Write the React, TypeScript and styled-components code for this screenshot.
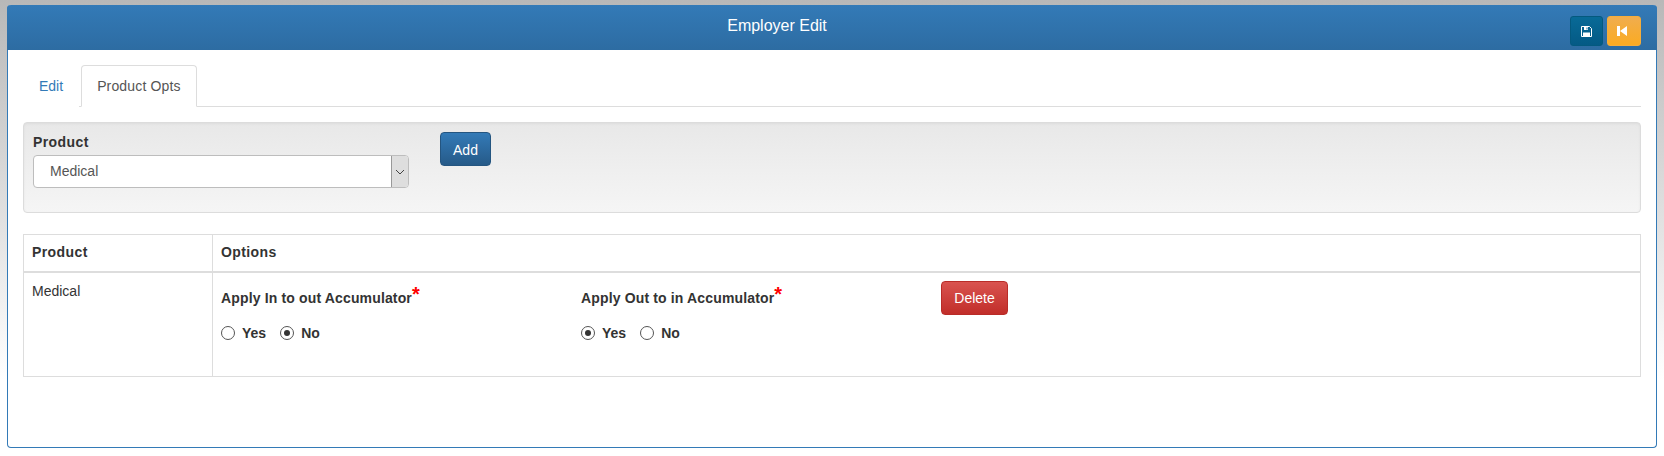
import React from "react"
import styled, { createGlobalStyle } from "styled-components"

const Global= createGlobalStyle`
    html, body {
        margin: 0;
        padding: 0;
        height: 456px;
        overflow: hidden;
        background: linear-gradient(to bottom, #b8b8b8 0, #ffffff 380px);
        font-family: "Liberation Sans", Arial, sans-serif;
        font-size: 14px;
        color: #333;
    }
    * { box-sizing: border-box; }
`
const Page= styled.div`
    padding: 5px 7px 0;
`
const Panel= styled.div`
    height: 443px;
    background: #fff;
    border: 1px solid #337ab7;
    border-top: 0;
    border-radius: 4px;
`
const Header= styled.div`
    height: 45px;
    margin: 0 -1px;
    padding-right: 110px;
    background: linear-gradient(to bottom, #337ab7 0, #2d6ca2 100%);
    border-radius: 4px 4px 0 0;
    color: #fff;
    font-size: 16px;
    display: flex;
    align-items: center;
    justify-content: center;
    position: relative;
`
const HeaderTitle= styled.div`
    margin-top: -4px;
`
const HeaderActions= styled.div`
    position: absolute;
    top: 11px;
    right: 16px;
    display: flex;
    gap: 4px;
`
const IconButton= styled.button<{ $tone: "save" | "back" }>`
    width: ${p=> p.$tone === "save" ? "33px" : "34px"};
    height: 30px;
    padding: 0;
    display: flex;
    align-items: center;
    justify-content: center;
    color: #fff;
    border-radius: 3px;
    border: 1px solid ${p=> p.$tone === "save" ? "#04597f" : "#f5ad3a"};
    background: ${p=> p.$tone === "save"
        ? "linear-gradient(to bottom, #086a97 0, #045a85 100%)"
        : "linear-gradient(to bottom, #f0ad4e 0, #fbab22 100%)"};
`
const BackIcon= styled.svg`
    margin-left: -4px;
`
const Body= styled.div`
    padding: 15px 15px 0;
`
const Tabs= styled.div`
    display: flex;
    gap: 2px;
    height: 42px;
    border-bottom: 1px solid #ddd;
`
const Tab= styled.div<{ $active?: boolean }>`
    height: 42px;
    padding: 10px 15px;
    line-height: 20px;
    letter-spacing: ${p=> p.$active ? ".15px" : "0"};
    border-radius: 4px 4px 0 0;
    border: 1px solid ${p=> p.$active ? "#ddd" : "transparent"};
    border-bottom-color: ${p=> p.$active ? "#fff" : "transparent"};
    color: ${p=> p.$active ? "#555" : "#337ab7"};
    background: #fff;
`
const Well= styled.div`
    margin-top: 15px;
    height: 91px;
    padding: 9px;
    display: flex;
    align-items: flex-start;
    gap: 31px;
    border: 1px solid #dcdcdc;
    border-radius: 4px;
    background: linear-gradient(to bottom, #e8e8e8 0, #f5f5f5 100%);
    box-shadow: inset 0 1px 3px rgba(0,0,0,.05);
`
const Field= styled.div`
    width: 376px;
`
const FieldLabel= styled.div`
    font-weight: bold;
    line-height: 20px;
    letter-spacing: .4px;
    margin-bottom: 3px;
`
const SelectBox= styled.div`
    height: 33px;
    display: flex;
    background: #fff;
    border: 1px solid #bdbdbd;
    border-radius: 4px;
    overflow: hidden;
    color: #555;
    line-height: 31px;
`
const SelectValue= styled.div`
    flex: 1;
    padding-left: 16px;
`
const SelectArrow= styled.div`
    width: 17px;
    display: flex;
    align-items: center;
    justify-content: center;
    background: #dedede;
    border-left: 1px solid #999;
`
const Button= styled.button<{ $danger?: boolean }>`
    height: 34px;
    padding: 0 12px;
    color: #fff;
    font: 14px "Liberation Sans", Arial, sans-serif;
    border-radius: 4px;
    border: 1px solid ${p=> p.$danger ? "#b92c28" : "#245580"};
    background: ${p=> p.$danger
        ? "linear-gradient(to bottom, #d9534f 0, #c12e2a 100%)"
        : "linear-gradient(to bottom, #337ab7 0, #265a88 100%)"};
`
const AddButton= styled(Button)`
    width: 51px;
    padding-top: 2px;
`
const DeleteButton= styled(Button)`
    width: 67px;
    flex: none;
`
const Table= styled.div`
    margin-top: 21px;
    border: 1px solid #ddd;
    display: grid;
    grid-template-columns: 188px 1fr;
`
const HeadCell= styled.div<{ $first?: boolean }>`
    height: 38px;
    padding: 0 8px;
    line-height: 34px;
    font-weight: bold;
    letter-spacing: .4px;
    border-bottom: 2px solid #ddd;
    border-left: ${p=> p.$first ? "0" : "1px solid #ddd"};
`
const ProductCell= styled.div`
    height: 103px;
    padding: 8px;
    line-height: 20px;
`
const OptionsCell= styled.div`
    height: 103px;
    padding: 8px;
    border-left: 1px solid #ddd;
    display: flex;
    align-items: flex-start;
`
const OptionGroup= styled.div`
    width: 360px;
    flex: none;
    padding-top: 7px;
`
const OptionLabel= styled.div`
    font-weight: bold;
    line-height: 20px;
    letter-spacing: .15px;
`
const Required= styled.sup`
    color: #f00;
    font-size: 20px;
    line-height: 0;
    vertical-align: baseline;
    position: relative;
    top: -2px;
`
const RadioRow= styled.div`
    display: flex;
    gap: 14px;
    margin-top: 15px;
`
const RadioLabel= styled.label`
    display: flex;
    align-items: center;
    gap: 7px;
    font-weight: bold;
    line-height: 20px;
`
const RadioMark= styled.span<{ $checked?: boolean }>`
    width: 14px;
    height: 14px;
    border-radius: 50%;
    border: 1px solid #555;
    background: #fff;
    display: flex;
    align-items: center;
    justify-content: center;
    &::after {
        content: "";
        width: 6px;
        height: 6px;
        border-radius: 50%;
        background: ${p=> p.$checked ? "#333" : "transparent"};
    }
`

const Radio= ({ label, checked }: { label: string, checked?: boolean })=> (
    <RadioLabel>
        <RadioMark $checked={checked} />
        {label}
    </RadioLabel>
)

const Option= ({ label, yes }: { label: string, yes: boolean })=> (
    <OptionGroup>
        <OptionLabel>{label}<Required>*</Required></OptionLabel>
        <RadioRow>
            <Radio label="Yes" checked={yes} />
            <Radio label="No" checked={!yes} />
        </RadioRow>
    </OptionGroup>
)

const App= ()=> {
    return (
        <Page>
            <Global />
            <Panel>
                <Header>
                    <HeaderTitle>Employer Edit</HeaderTitle>
                    <HeaderActions>
                        <IconButton $tone="save">
                            <svg width="11" height="11" viewBox="0 0 11 11">
                                <path d="M.5.5h8l2 2v8H.5z" fill="none" stroke="#fff" />
                                <path d="M3 1h4v3H3zM2 6.5h7V10H2z" fill="#fff" />
                                <path d="M5.5 1.5h1v2h-1z" fill="#086a97" />
                            </svg>
                        </IconButton>
                        <IconButton $tone="back">
                            <BackIcon width="10" height="10" viewBox="0 0 10 10">
                                <path d="M0 0h3v10H0zM3 5l7-5v10z" fill="#fff" />
                            </BackIcon>
                        </IconButton>
                    </HeaderActions>
                </Header>
                <Body>
                    <Tabs>
                        <Tab>Edit</Tab>
                        <Tab $active>Product Opts</Tab>
                    </Tabs>
                    <Well>
                        <Field>
                            <FieldLabel>Product</FieldLabel>
                            <SelectBox>
                                <SelectValue>Medical</SelectValue>
                                <SelectArrow>
                                    <svg width="10" height="6" viewBox="0 0 10 6">
                                        <path d="M1 1l4 4 4-4" fill="none" stroke="#444" strokeWidth="1" />
                                    </svg>
                                </SelectArrow>
                            </SelectBox>
                        </Field>
                        <AddButton>Add</AddButton>
                    </Well>
                    <Table>
                        <HeadCell $first>Product</HeadCell>
                        <HeadCell>Options</HeadCell>
                        <ProductCell>Medical</ProductCell>
                        <OptionsCell>
                            <Option label="Apply In to out Accumulator" yes={false} />
                            <Option label="Apply Out to in Accumulator" yes={true} />
                            <DeleteButton $danger>Delete</DeleteButton>
                        </OptionsCell>
                    </Table>
                </Body>
            </Panel>
        </Page>
    )
}

export default App
